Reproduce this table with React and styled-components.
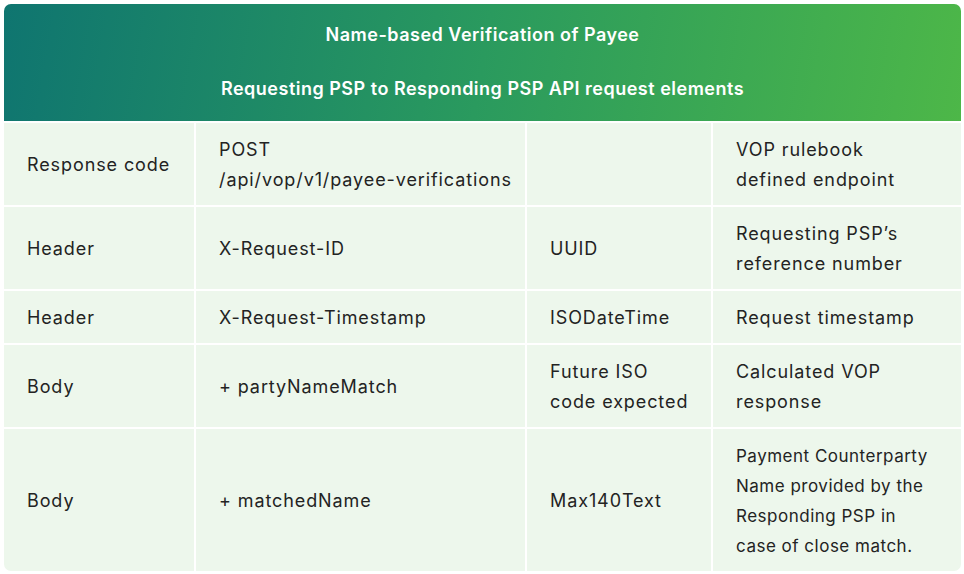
import React from "react";
import styled, { createGlobalStyle } from "styled-components";

const GlobalStyle = createGlobalStyle`
  html, body {
    margin: 0;
    padding: 0;
    background: #ffffff;
  }
  body {
    font-family: Inter, "Liberation Sans", sans-serif;
  }
`;

const rows = [
  ["Response code", "POST\n/api/vop/v1/payee-verifications", "", "VOP rulebook\ndefined endpoint"],
  ["Header", "X-Request-ID", "UUID", "Requesting PSP’s\nreference number"],
  ["Header", "X-Request-Timestamp", "ISODateTime", "Request timestamp"],
  ["Body", "+ partyNameMatch", "Future ISO\ncode expected", "Calculated VOP\nresponse"],
  [
    "Body",
    "+ matchedName",
    "Max140Text",
    "Payment Counterparty\nName provided by the\nResponding PSP in\ncase of close match.",
  ],
];

const widths = [192, 331, 186, 248];

const App = () => (
  <>
    <GlobalStyle />
    <Wrapper>
      <Table>
        <colgroup>
          {widths.map((w, i) => (
            <col key={i} style={{ width: w }} />
          ))}
        </colgroup>
        <thead>
          <tr>
            <HeadCell colSpan={4}>
              <Title>Name-based Verification of Payee</Title>
              <Title $spaced>Requesting PSP to Responding PSP API request elements</Title>
            </HeadCell>
          </tr>
        </thead>
        <tbody>
          {rows.map((row, r) => (
            <tr key={r}>
              {row.map((cell, c) => {
                const lines = cell.split("\n");
                return (
                  <Cell key={c} $small={lines.length > 2}>
                    {lines.map((line, l) => (
                      <Line key={l}>{line}</Line>
                    ))}
                  </Cell>
                );
              })}
            </tr>
          ))}
        </tbody>
      </Table>
    </Wrapper>
  </>
);

export default App;

const Wrapper = styled.div`
  padding: 4px 3px 2px 4px;
`;

const Table = styled.table`
  width: 957px;
  table-layout: fixed;
  border-collapse: separate;
  border-spacing: 0;
  border-radius: 7px;
  overflow: hidden;
  background: #edf7ec;
`;

const HeadCell = styled.th`
  background: linear-gradient(100deg, #0f7570 0%, #2a9a5e 50%, #4db748 100%);
  color: #ffffff;
  padding: 16px 24px 17px;
  border-bottom: 2px solid #ffffff;
  text-align: center;
`;

const Title = styled.p`
  margin: ${(p) => (p.$spaced ? "24px 0 0" : "0")};
  font-size: 18px;
  font-weight: 600;
  letter-spacing: 0.5px;
  line-height: 30px;
`;

const Cell = styled.td`
  padding: 12px 16px 10px 23px;
  vertical-align: middle;
  font-size: ${(p) => (p.$small ? "17px" : "18px")};
  font-weight: 400;
  letter-spacing: ${(p) => (p.$small ? "0.5px" : "0.9px")};
  line-height: 30px;
  color: #232323;
  border-right: 2px solid #ffffff;
  border-bottom: 2px solid #ffffff;

  &:last-child {
    border-right: none;
  }

  tr:last-child > & {
    border-bottom: none;
  }
`;

const Line = styled.div`
  white-space: nowrap;
`;
